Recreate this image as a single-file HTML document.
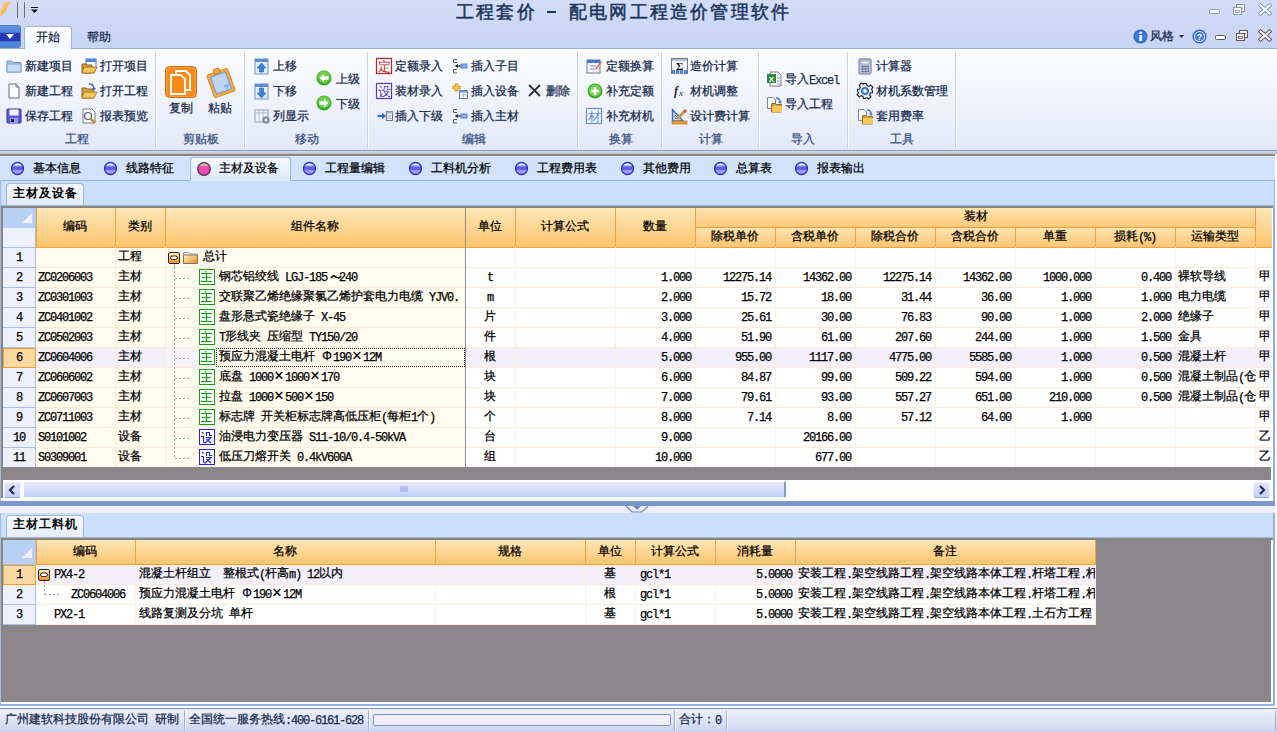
<!DOCTYPE html><html><head><meta charset="utf-8"><style>
*{margin:0;padding:0;box-sizing:border-box}
body{width:1277px;height:732px;position:relative;overflow:hidden;background:#ffffff;font-family:"Liberation Sans",sans-serif;font-size:12px;color:#000}
body>div{position:absolute}
.t{white-space:pre;line-height:12px;font-size:12px;-webkit-text-stroke:0.25px currentColor}
.t i{font-style:normal;font-family:"Liberation Mono",monospace;letter-spacing:-1.2px;position:relative;top:1px}
.rb{color:#15294b}
.w{display:inline-block;width:12px;height:12px;line-height:12px;vertical-align:top;text-align:center;font-weight:normal}
.gl{color:#34507e}
svg{position:absolute;overflow:visible}
</style></head><body><div style="left:0px;top:0px;width:1277px;height:48px;background:linear-gradient(#d3ddf7,#cdd8f5 50%,#c8d5f2)"></div>
<svg style="left:0;top:0" width="12" height="17"><defs><linearGradient id="lg" x1="0" y1="0" x2="1" y2="1"><stop offset="0" stop-color="#ffd890"/><stop offset="1" stop-color="#f89818"/></linearGradient></defs><path d="M4 2 L11 2 L9 4.5 L7 8 L6.5 10 L2 15.5 L0 16 L0 14 L1.5 9.5 L3 5Z" fill="url(#lg)"/></svg>
<div style="left:17px;top:2px;width:1px;height:16px;background:#6e6e74"></div>
<div style="left:24px;top:2px;width:1px;height:16px;background:#6e6e74"></div>
<svg style="left:31px;top:7px" width="8" height="7"><rect x="0" y="0" width="7" height="1" fill="#111"/><path d="M0 2.5 L7 2.5 L3.5 6 Z" fill="#111"/></svg>
<div class="t" style="left:456px;top:3px;font-size:18px;line-height:18px;color:#1b355a;letter-spacing:2.2px;-webkit-text-stroke:0.5px #1b355a">工程套价</div>
<div style="left:547px;top:11px;width:9px;height:2px;background:#1b355a"></div>
<div class="t" style="left:569px;top:3px;font-size:18px;line-height:18px;color:#1b355a;letter-spacing:2.2px;-webkit-text-stroke:0.5px #1b355a">配电网工程造价管理软件</div>
<svg style="left:1209px;top:4px" width="12" height="12"><rect x="0.5" y="5.5" width="10" height="4" rx="1" fill="#fff" stroke="#8898b8"/></svg>
<svg style="left:1233px;top:4px" width="13" height="12"><rect x="3.5" y="0.5" width="8" height="7" fill="#fff" stroke="#8898b8"/><rect x="5" y="3" width="5" height="2" fill="#8898b8" opacity="0.5"/><rect x="0.5" y="3.5" width="8" height="7" fill="#fff" stroke="#8898b8"/><rect x="2.5" y="6.5" width="4" height="2" fill="none" stroke="#8898b8" stroke-width="0.8"/></svg>
<svg style="left:1259px;top:4px" width="12" height="12"><path d="M1.5 1.5 L10.5 9.5 M10.5 1.5 L1.5 9.5" stroke="#8898b8" stroke-width="4" stroke-linecap="square"/><path d="M1.5 1.5 L10.5 9.5 M10.5 1.5 L1.5 9.5" stroke="#fff" stroke-width="2" stroke-linecap="square"/></svg>
<div style="left:0;top:25px;width:21px;height:23px;background:linear-gradient(#5e96e0 0,#4a86d8 30%,#2a3cb4 35%,#2438b0 70%,#4a86d8 75%,#4a86d8);border:1px solid #5a7cc8;border-left:none;border-radius:0 3px 3px 0"></div>
<svg style="left:6px;top:34px" width="9" height="6"><path d="M0 0 L8 0 L4 5 Z" fill="#fff"/></svg>
<div style="left:24px;top:26px;width:48px;height:23px;background:linear-gradient(#ffffff,#f2f6fd);border:1px solid #9fb2d6;border-bottom:none;border-radius:3px 3px 0 0"></div>
<div class="t rb" style="left:36px;top:31px;">开始</div>
<div class="t rb" style="left:87px;top:31px;">帮助</div>
<svg style="left:1133px;top:29px" width="15" height="15"><circle cx="7.5" cy="7.5" r="7" fill="#2a62c8"/><circle cx="7.5" cy="7.5" r="5.8" fill="#3d7ae0"/><rect x="6.4" y="6" width="2.4" height="6" fill="#fff"/><circle cx="7.6" cy="3.8" r="1.3" fill="#fff"/></svg>
<div class="t rb" style="left:1150px;top:30px;">风格</div>
<svg style="left:1179px;top:35px" width="6" height="4"><path d="M0 0 L5 0 L2.5 3 Z" fill="#15294b"/></svg>
<svg style="left:1192px;top:29px" width="15" height="15"><circle cx="7.5" cy="7.5" r="7" fill="#2a62c8"/><circle cx="7.5" cy="7.5" r="5.6" fill="#e8f0fc"/><circle cx="7.5" cy="7.5" r="4.6" fill="#3d7ae0"/><text x="7.5" y="11" font-size="9" font-weight="bold" text-anchor="middle" fill="#fff" font-family="Liberation Sans">?</text></svg>
<svg style="left:1215px;top:30px" width="12" height="12"><rect x="0.5" y="5.5" width="10" height="4" rx="1" fill="#fff" stroke="#6a5058"/></svg>
<svg style="left:1236px;top:30px" width="13" height="12"><rect x="3.5" y="0.5" width="8" height="7" fill="#fff" stroke="#6a5058"/><rect x="5" y="3" width="5" height="2" fill="#6a5058" opacity="0.5"/><rect x="0.5" y="3.5" width="8" height="7" fill="#fff" stroke="#6a5058"/><rect x="2.5" y="6.5" width="4" height="2" fill="none" stroke="#6a5058" stroke-width="0.8"/></svg>
<svg style="left:1259px;top:30px" width="12" height="12"><path d="M1.5 1.5 L10.5 9.5 M10.5 1.5 L1.5 9.5" stroke="#6a5058" stroke-width="4" stroke-linecap="square"/><path d="M1.5 1.5 L10.5 9.5 M10.5 1.5 L1.5 9.5" stroke="#fff" stroke-width="2" stroke-linecap="square"/></svg>
<div style="left:0;top:48px;width:1277px;height:1px;background:#9aaed6"></div>
<div style="left:25px;top:48px;width:46px;height:1px;background:#fbfcff"></div>
<div style="left:0px;top:49px;width:1277px;height:101px;background:linear-gradient(#fcfdff,#eff2fc 55%,#e3e8f8)"></div>
<div style="left:0px;top:150px;width:1277px;height:1px;background:#8aa0c8"></div>
<div style="left:0px;top:151px;width:1277px;height:3px;background:linear-gradient(#d6dae8,#b9bfd3)"></div>
<div style="left:0px;top:154px;width:1275px;height:2px;background:#8e8676"></div>
<div style="left:155px;top:52px;width:1px;height:96px;background:#c9d3e8"></div>
<div style="left:156px;top:52px;width:1px;height:96px;background:#ffffff"></div>
<div style="left:244px;top:52px;width:1px;height:96px;background:#c9d3e8"></div>
<div style="left:245px;top:52px;width:1px;height:96px;background:#ffffff"></div>
<div style="left:367px;top:52px;width:1px;height:96px;background:#c9d3e8"></div>
<div style="left:368px;top:52px;width:1px;height:96px;background:#ffffff"></div>
<div style="left:577px;top:52px;width:1px;height:96px;background:#c9d3e8"></div>
<div style="left:578px;top:52px;width:1px;height:96px;background:#ffffff"></div>
<div style="left:661px;top:52px;width:1px;height:96px;background:#c9d3e8"></div>
<div style="left:662px;top:52px;width:1px;height:96px;background:#ffffff"></div>
<div style="left:758px;top:52px;width:1px;height:96px;background:#c9d3e8"></div>
<div style="left:759px;top:52px;width:1px;height:96px;background:#ffffff"></div>
<div style="left:847px;top:52px;width:1px;height:96px;background:#c9d3e8"></div>
<div style="left:848px;top:52px;width:1px;height:96px;background:#ffffff"></div>
<div style="left:955px;top:52px;width:1px;height:96px;background:#c9d3e8"></div>
<div style="left:956px;top:52px;width:1px;height:96px;background:#ffffff"></div>
<div class="t gl" style="left:65px;top:133px;">工程</div>
<div class="t gl" style="left:183px;top:133px;">剪贴板</div>
<div class="t gl" style="left:295px;top:133px;">移动</div>
<div class="t gl" style="left:462px;top:133px;">编辑</div>
<div class="t gl" style="left:609px;top:133px;">换算</div>
<div class="t gl" style="left:699px;top:133px;">计算</div>
<div class="t gl" style="left:791px;top:133px;">导入</div>
<div class="t gl" style="left:890px;top:133px;">工具</div>
<svg style="left:6px;top:58px" width="16" height="16" viewBox="0 0 16 16"><path d="M1 3 h5 l1.5 1.5 H15 V14 H1 Z" fill="#a9c8f0" stroke="#6e94c8"/><path d="M1 6 H15 V14 H1Z" fill="#c6dcf8" stroke="#7ea2d2"/></svg>
<div class="t rb" style="left:25px;top:60px;">新建项目</div>
<svg style="left:81px;top:58px" width="16" height="16" viewBox="0 0 16 16"><rect x="5" y="1" width="10" height="9" fill="#ffffff" stroke="#3f6fc0"/><rect x="5" y="1" width="10" height="3" fill="#4d86d8"/><path d="M1 6 h4 l1 1 h5 V15 H1Z" fill="#d9a040" stroke="#8a6020"/><path d="M3 9 H16 L13 15 H1Z" fill="#f8c860" stroke="#a87428"/></svg>
<div class="t rb" style="left:100px;top:60px;">打开项目</div>
<svg style="left:6px;top:83px" width="16" height="16" viewBox="0 0 16 16"><path d="M3 1 H10 L13 4 V15 H3Z" fill="#fff" stroke="#606a80"/><path d="M10 1 V4 H13" fill="none" stroke="#606a80"/></svg>
<div class="t rb" style="left:25px;top:85px;">新建工程</div>
<svg style="left:81px;top:83px" width="16" height="16" viewBox="0 0 16 16"><path d="M1 5 h4 l1 1 h6 V15 H1Z" fill="#d9a040" stroke="#8a6020"/><path d="M3 9 H16 L13 15 H1Z" fill="#f8c860" stroke="#a87428"/><path d="M8 1 Q13 1 13 6" stroke="#3a6ac0" stroke-width="1.5" fill="none"/><path d="M11 5 L13 8 L15 5Z" fill="#3a6ac0"/></svg>
<div class="t rb" style="left:100px;top:85px;">打开工程</div>
<svg style="left:6px;top:108px" width="16" height="16" viewBox="0 0 16 16"><rect x="1" y="1" width="14" height="14" rx="1" fill="#5a5ad8" stroke="#3030a0"/><rect x="3.5" y="1.5" width="9" height="6" fill="#f4f4fc"/><rect x="4" y="10" width="8" height="5" fill="#9898e8"/><rect x="5" y="11" width="3" height="3" fill="#202040"/></svg>
<div class="t rb" style="left:25px;top:110px;">保存工程</div>
<svg style="left:81px;top:108px" width="16" height="16" viewBox="0 0 16 16"><path d="M2 1 H11 L14 4 V15 H2Z" fill="#fff" stroke="#707888"/><circle cx="7" cy="8" r="3.5" fill="#e8f0fa" stroke="#505a70" stroke-width="1.2"/><path d="M9.5 10.5 L14 15" stroke="#d09030" stroke-width="2.5"/></svg>
<div class="t rb" style="left:100px;top:110px;">报表预览</div>
<svg style="left:165px;top:66px" width="32" height="32" viewBox="0 0 32 32"><rect x="0.5" y="0.5" width="31" height="31" rx="4" fill="#f78c1a" stroke="#d06a08"/><rect x="1.5" y="1.5" width="29" height="29" rx="3" fill="none" stroke="#ffb060" stroke-opacity="0.6"/><path d="M11 5 H21 L25 9 V24 H11Z" fill="#f78c1a" stroke="#fff" stroke-width="1.8"/><path d="M6 9 H16 L20 13 V28 H6Z" fill="#f78c1a" stroke="#fff" stroke-width="1.8"/></svg>
<div class="t rb" style="left:169px;top:102px;">复制</div>
<svg style="left:205px;top:66px" width="32" height="32" viewBox="0 0 32 32"><g transform="rotate(-20 16 17)"><rect x="5" y="5" width="22" height="24" rx="2" fill="#f4a848" stroke="#e08a20"/><rect x="8" y="8" width="16" height="18" fill="#bcd6f4" stroke="#6e9ad8"/><rect x="13" y="2" width="6" height="5" rx="1" fill="#f4a848" stroke="#d88018"/><path d="M17 20 L24 20 L20 26Z" fill="#8ab4ea"/></g></svg>
<div class="t rb" style="left:208px;top:102px;">粘贴</div>
<svg style="left:254px;top:58px" width="16" height="16" viewBox="0 0 16 16"><rect x="1" y="1" width="13" height="15" fill="#e4eefc" stroke="#6f94cc"/><rect x="1" y="1" width="13" height="3" fill="#5f8ad0"/><path d="M7.5 5 L12 10 H9.5 V14 H5.5 V10 H3Z" fill="#3a82e0" stroke="#2860b8" stroke-width="0.6"/></svg>
<div class="t rb" style="left:273px;top:60px;">上移</div>
<svg style="left:254px;top:83px" width="16" height="16" viewBox="0 0 16 16"><rect x="1" y="1" width="13" height="15" fill="#e4eefc" stroke="#6f94cc"/><rect x="1" y="1" width="13" height="3" fill="#5f8ad0"/><path d="M7.5 15 L12 10 H9.5 V5 H5.5 V10 H3Z" fill="#3a82e0" stroke="#2860b8" stroke-width="0.6"/></svg>
<div class="t rb" style="left:273px;top:85px;">下移</div>
<svg style="left:254px;top:108px" width="16" height="16" viewBox="0 0 16 16"><rect x="1" y="2" width="13" height="12" fill="#f4f6fb" stroke="#9098b0"/><path d="M1 5 H14 M5 2 V14 M9 2 V14" stroke="#b0b8cc"/><circle cx="12" cy="12" r="3.2" fill="#9aa2b4" stroke="#707888"/><circle cx="12" cy="12" r="1.2" fill="#fff"/></svg>
<div class="t rb" style="left:273px;top:110px;">列显示</div>
<svg style="left:316px;top:70px" width="16" height="16" viewBox="0 0 16 16"><circle cx="8" cy="8" r="7.5" fill="#3ea82a"/><circle cx="8" cy="7" r="6" fill="#6cd04a"/><path d="M3.5 8 L8 3.8 V6.3 H12.5 V9.7 H8 V12.2Z" fill="#fff"/></svg>
<div class="t rb" style="left:336px;top:73px;">上级</div>
<svg style="left:316px;top:95px" width="16" height="16" viewBox="0 0 16 16"><circle cx="8" cy="8" r="7.5" fill="#3ea82a"/><circle cx="8" cy="7" r="6" fill="#6cd04a"/><path d="M12.5 8 L8 3.8 V6.3 H3.5 V9.7 H8 V12.2Z" fill="#fff"/></svg>
<div class="t rb" style="left:336px;top:98px;">下级</div>
<svg style="left:376px;top:58px" width="16" height="16" viewBox="0 0 16 16"><rect x="0.5" y="0.5" width="15" height="15" fill="#fff" stroke="#c02020" stroke-width="1.2"/><text x="8" y="13" font-size="13" text-anchor="middle" fill="#c02020" font-family="Liberation Sans">定</text></svg>
<div class="t rb" style="left:395px;top:60px;">定额录入</div>
<svg style="left:376px;top:83px" width="16" height="16" viewBox="0 0 16 16"><rect x="0.5" y="0.5" width="15" height="15" fill="#fff" stroke="#4a3ad0" stroke-width="1.2"/><text x="8" y="13" font-size="13" text-anchor="middle" fill="#4a3ad0" font-family="Liberation Sans">设</text></svg>
<div class="t rb" style="left:395px;top:85px;">装材录入</div>
<svg style="left:377px;top:108px" width="16" height="16" viewBox="0 0 16 16"><path d="M0.5 8 H6" stroke="#3a6ad0" stroke-width="2.2"/><path d="M5 4.5 L9 8 L5 11.5Z" fill="#3a6ad0"/><rect x="9.5" y="3.5" width="6" height="9" fill="#f6f8fc" stroke="#6a7490"/><rect x="9.5" y="3.5" width="6" height="2" fill="#a0b0d0"/><path d="M10.5 8 H14.5 M10.5 10.5 H14.5" stroke="#9aa2b4"/></svg>
<div class="t rb" style="left:395px;top:110px;">插入下级</div>
<svg style="left:452px;top:58px" width="16" height="16" viewBox="0 0 16 16"><path d="M5 1.5 H1.5 V4.5 H5 M5 11.5 H1.5 V15 H5" stroke="#505868" fill="none"/><path d="M3.5 8 H9" stroke="#202830" stroke-width="1.2"/><path d="M3 8 L6 6 V10Z" fill="#202830"/><rect x="9" y="6" width="6" height="4" fill="#8ab4f0" stroke="#3a6ac0" stroke-width="0.8"/></svg>
<div class="t rb" style="left:471px;top:60px;">插入子目</div>
<svg style="left:452px;top:83px" width="16" height="16" viewBox="0 0 16 16"><path d="M4.5 0.5 V8.5 M0.5 4.5 H8.5" stroke="#c88a10" stroke-width="3.6"/><path d="M4.5 1.5 V7.5 M1.5 4.5 H7.5" stroke="#ffd040" stroke-width="2"/><rect x="7.5" y="7.5" width="8" height="8" fill="#fff" stroke="#5a7ab8"/><rect x="7.5" y="7.5" width="8" height="2" fill="#6a98e0"/><path d="M7.5 12 H15.5 M11.5 9.5 V15.5" stroke="#a0b0d0" stroke-width="0.8"/></svg>
<div class="t rb" style="left:471px;top:85px;">插入设备</div>
<svg style="left:452px;top:108px" width="16" height="16" viewBox="0 0 16 16"><path d="M5 1.5 H1.5 V4.5 H5 M5 11.5 H1.5 V15 H5" stroke="#505868" fill="none"/><path d="M3.5 8 H9" stroke="#202830" stroke-width="1.2"/><path d="M3 8 L6 6 V10Z" fill="#202830"/><rect x="9" y="6" width="6" height="4" fill="#8ab4f0" stroke="#3a6ac0" stroke-width="0.8"/></svg>
<div class="t rb" style="left:471px;top:110px;">插入主材</div>
<svg style="left:527px;top:83px" width="16" height="16" viewBox="0 0 16 16"><path d="M2 2 L13 13 M13 2 L2 13" stroke="#303038" stroke-width="1.8"/></svg>
<div class="t rb" style="left:546px;top:85px;">删除</div>
<svg style="left:586px;top:58px" width="16" height="16" viewBox="0 0 16 16"><rect x="1" y="2" width="13" height="13" fill="#f4f6fb" stroke="#6a7ca0"/><rect x="1" y="2" width="13" height="3" fill="#4a78c8"/><path d="M4 8 H10 M4 11 H9" stroke="#8090b0"/><path d="M9 11 L15 3 L16 4 L10 12Z" fill="#e07020"/></svg>
<div class="t rb" style="left:606px;top:60px;">定额换算</div>
<svg style="left:587px;top:83px" width="16" height="16" viewBox="0 0 16 16"><circle cx="8" cy="8" r="7.5" fill="#3ea82a"/><circle cx="8" cy="7.5" r="6" fill="#72d050"/><path d="M8 4 V12 M4 8 H12" stroke="#fff" stroke-width="2.4"/></svg>
<div class="t rb" style="left:606px;top:85px;">补充定额</div>
<svg style="left:586px;top:108px" width="16" height="16" viewBox="0 0 16 16"><rect x="0.5" y="0.5" width="15" height="15" fill="#f2f6fc" stroke="#6090d0" stroke-width="1.2"/><text x="8" y="13" font-size="13" text-anchor="middle" fill="#6090d0" font-family="Liberation Sans">材</text></svg>
<div class="t rb" style="left:606px;top:110px;">补充材机</div>
<svg style="left:671px;top:58px" width="17" height="17" viewBox="0 0 17 17"><rect x="0.5" y="0.5" width="16" height="15" fill="#f4f6fa" stroke="#6a7890"/><path d="M1 2 H16" stroke="#7a8aa8"/><text x="8.5" y="11.5" font-size="11" font-weight="bold" text-anchor="middle" fill="#101820" font-family="Liberation Serif">Σ</text><rect x="1" y="12" width="15" height="3.5" fill="#5a86d0"/><path d="M4.5 12 V16 M8.5 12 V16 M12.5 12 V16" stroke="#e0e8f8" stroke-width="0.8"/></svg>
<div class="t rb" style="left:690px;top:60px;">造价计算</div>
<svg style="left:673px;top:83px" width="16" height="16" viewBox="0 0 16 16"><text x="1" y="12" font-size="12" font-style="italic" font-weight="bold" fill="#202840" font-family="Liberation Serif">f</text><text x="6" y="13" font-size="9" font-style="italic" fill="#202840" font-family="Liberation Serif">x</text></svg>
<div class="t rb" style="left:690px;top:85px;">材机调整</div>
<svg style="left:671px;top:108px" width="16" height="16" viewBox="0 0 16 16"><path d="M1.5 1.5 V13 H12Z" fill="#cfe0fa" stroke="#3a6ad0" stroke-width="1.4"/><path d="M4 7 V10.5 H7.5Z" fill="#fff" stroke="#3a6ad0" stroke-width="0.8"/><path d="M6 11 L14 3" stroke="#c89048" stroke-width="2.6"/><path d="M13 2 L15 4" stroke="#e05030" stroke-width="2.6"/><rect x="1" y="13" width="15" height="3" fill="#f0a030" stroke="#a86818" stroke-width="0.6"/></svg>
<div class="t rb" style="left:690px;top:110px;">设计费计算</div>
<svg style="left:766px;top:71px" width="16" height="16" viewBox="0 0 16 16"><path d="M4 1 H12 L15 4 V15 H4Z" fill="#fff" stroke="#708090"/><rect x="1" y="3" width="9" height="9" fill="#2d8a3a"/><text x="5.5" y="10.5" font-size="8" font-weight="bold" text-anchor="middle" fill="#fff" font-family="Liberation Sans">X</text><path d="M11 7 H14 M11 10 H14 M11 13 H14" stroke="#8090a0"/></svg>
<div class="t rb" style="left:785px;top:73px;">导入<i>Excel</i></div>
<svg style="left:766px;top:96px" width="16" height="16" viewBox="0 0 16 16"><path d="M1.5 1.5 H7 L9.5 4 V12.5 H1.5Z" fill="#fff" stroke="#7a8498"/><path d="M10 2 Q14 2 14 6" stroke="#3a78d8" stroke-width="1.4" fill="none"/><path d="M12 5.5 L14 8 L16 5.5Z" fill="#3a78d8"/><path d="M5.5 7.5 h4 l1 1 h5 V16 H5.5Z" fill="#d8a040" stroke="#9a6a20"/><path d="M6 10 H16 V16 H6Z" fill="#f8c858"/></svg>
<div class="t rb" style="left:785px;top:98px;">导入工程</div>
<svg style="left:857px;top:58px" width="16" height="16" viewBox="0 0 16 16"><rect x="2" y="1" width="12" height="15" rx="1" fill="#c4cce0" stroke="#6a7494"/><rect x="4" y="3" width="8" height="3" fill="#e8f0fc" stroke="#7a8aa8" stroke-width="0.6"/><path d="M4.5 8.5 h2 M7.5 8.5 h2 M10.5 8.5 h1.5 M4.5 11 h2 M7.5 11 h2 M10.5 11 h1.5 M4.5 13.5 h2 M7.5 13.5 h2 M10.5 13.5 h1.5" stroke="#3a4a80" stroke-width="1.5"/></svg>
<div class="t rb" style="left:876px;top:60px;">计算器</div>
<svg style="left:857px;top:83px" width="16" height="16" viewBox="0 0 16 16"><g transform="translate(8 8)"><path d="M-1.6 -7.5 H1.6 L2 -5.4 L3.9 -4.6 L5.6 -5.9 L7.9 -3.6 L6.6 -1.9 L7.4 0 L7.5 1.6 L5.4 2 L4.6 3.9 L5.9 5.6 L3.6 7.9 L1.9 6.6 L0 7.4 L-1.6 7.5 L-2 5.4 L-3.9 4.6 L-5.6 5.9 L-7.9 3.6 L-6.6 1.9 L-7.4 0 L-7.5 -1.6 L-5.4 -2 L-4.6 -3.9 L-5.9 -5.6 L-3.6 -7.9 L-1.9 -6.6Z" fill="#e8f0fc" stroke="#1a2030" stroke-width="1.1"/><circle r="3.6" fill="#4a8ae0" stroke="#2a4a90" stroke-width="0.8"/><circle r="1.8" fill="#fff"/></g></svg>
<div class="t rb" style="left:876px;top:85px;">材机系数管理</div>
<svg style="left:857px;top:108px" width="16" height="16" viewBox="0 0 16 16"><path d="M1.5 1.5 H7 L9.5 4 V12.5 H1.5Z" fill="#fff" stroke="#7a8498"/><path d="M10 2 Q14 2 14 6" stroke="#3a78d8" stroke-width="1.4" fill="none"/><path d="M12 5.5 L14 8 L16 5.5Z" fill="#3a78d8"/><path d="M5.5 7.5 h4 l1 1 h5 V16 H5.5Z" fill="#d8a040" stroke="#9a6a20"/><path d="M6 10 H16 V16 H6Z" fill="#f8c858"/></svg>
<div class="t rb" style="left:876px;top:110px;">套用费率</div>
<div style="left:0px;top:156px;width:1275px;height:24px;background:#d0e3fb"></div>
<div style="left:190px;top:157px;width:101px;height:23px;background:linear-gradient(#f4f8fe,#dde9f9);border:1px solid #9db7e0;border-bottom:none;border-radius:3px 3px 0 0"></div>
<svg style="left:0;top:0" width="1" height="1"><defs><linearGradient id="bb" x1="0" y1="0" x2="0" y2="1"><stop offset="0" stop-color="#ffffff"/><stop offset="0.18" stop-color="#f4f0ff"/><stop offset="0.3" stop-color="#9090f0"/><stop offset="0.38" stop-color="#5a62e8"/><stop offset="0.6" stop-color="#5a62e8"/><stop offset="0.66" stop-color="#a890f4"/><stop offset="1" stop-color="#b0a0f8"/></linearGradient></defs></svg>
<svg style="left:11px;top:162px" width="13" height="13" viewBox="0 0 13 13"><circle cx="6.5" cy="6.5" r="6" fill="url(#bb)" stroke="#2434b4" stroke-width="1.3"/></svg>
<div class="t" style="left:33px;top:162px;">基本信息</div>
<svg style="left:104px;top:162px" width="13" height="13" viewBox="0 0 13 13"><circle cx="6.5" cy="6.5" r="6" fill="url(#bb)" stroke="#2434b4" stroke-width="1.3"/></svg>
<div class="t" style="left:126px;top:162px;">线路特征</div>
<svg style="left:197px;top:162px" width="14" height="14" viewBox="0 0 14 14"><defs><linearGradient id="pk" x1="0" y1="0" x2="0" y2="1"><stop offset="0" stop-color="#d8d0a0"/><stop offset="0.22" stop-color="#c8b8a0"/><stop offset="0.3" stop-color="#ec48b4"/><stop offset="1" stop-color="#ee4cb0"/></linearGradient></defs><circle cx="7" cy="7" r="6.3" fill="url(#pk)" stroke="#4a3040" stroke-width="1.2"/></svg>
<div class="t" style="left:219px;top:162px;">主材及设备</div>
<svg style="left:303px;top:162px" width="13" height="13" viewBox="0 0 13 13"><circle cx="6.5" cy="6.5" r="6" fill="url(#bb)" stroke="#2434b4" stroke-width="1.3"/></svg>
<div class="t" style="left:325px;top:162px;">工程量编辑</div>
<svg style="left:409px;top:162px" width="13" height="13" viewBox="0 0 13 13"><circle cx="6.5" cy="6.5" r="6" fill="url(#bb)" stroke="#2434b4" stroke-width="1.3"/></svg>
<div class="t" style="left:431px;top:162px;">工料机分析</div>
<svg style="left:515px;top:162px" width="13" height="13" viewBox="0 0 13 13"><circle cx="6.5" cy="6.5" r="6" fill="url(#bb)" stroke="#2434b4" stroke-width="1.3"/></svg>
<div class="t" style="left:537px;top:162px;">工程费用表</div>
<svg style="left:621px;top:162px" width="13" height="13" viewBox="0 0 13 13"><circle cx="6.5" cy="6.5" r="6" fill="url(#bb)" stroke="#2434b4" stroke-width="1.3"/></svg>
<div class="t" style="left:643px;top:162px;">其他费用</div>
<svg style="left:714px;top:162px" width="13" height="13" viewBox="0 0 13 13"><circle cx="6.5" cy="6.5" r="6" fill="url(#bb)" stroke="#2434b4" stroke-width="1.3"/></svg>
<div class="t" style="left:736px;top:162px;">总算表</div>
<svg style="left:795px;top:162px" width="13" height="13" viewBox="0 0 13 13"><circle cx="6.5" cy="6.5" r="6" fill="url(#bb)" stroke="#2434b4" stroke-width="1.3"/></svg>
<div class="t" style="left:817px;top:162px;">报表输出</div>
<div style="left:0px;top:180px;width:1275px;height:26px;background:#c9dffa;border-top:1px solid #8fb3ea;border-right:1px solid #8fb3ea"></div>
<div style="left:0px;top:180px;width:1px;height:528px;background:#9bbcec"></div>
<div style="left:1273px;top:206px;width:2px;height:500px;background:#8fb3ea"></div>
<div style="left:6px;top:183px;width:78px;height:24px;background:linear-gradient(#f6f9fe,#e3ecf9);border:1px solid #9db7e0;border-bottom:none;border-radius:4px 4px 0 0"></div>
<div style="left:191px;top:180px;width:99px;height:1px;background:#dde9f9"></div>
<div class="t" style="left:13px;top:187px;font-weight:bold;letter-spacing:1px;-webkit-text-stroke:0">主材及设备</div>
<div style="left:0px;top:205px;width:1275px;height:1px;background:#98baee"></div>
<div style="left:1px;top:206px;width:1272px;height:2px;background:#8c8478"></div>
<div style="left:1px;top:206px;width:2px;height:293px;background:#8c8478"></div>
<div style="left:1271px;top:208px;width:2px;height:272px;background:#ffffff"></div>
<div style="left:3px;top:208px;width:33px;height:20px;background:#b8d0f4"></div>
<div style="left:3px;top:228px;width:32px;height:19px;background:#eef0fb"></div>
<div style="left:35px;top:208px;width:1px;height:40px;background:#a8bfe6"></div>
<div style="left:3px;top:247px;width:32px;height:1px;background:#a8bfe6"></div>
<svg style="left:20px;top:212px" width="13" height="12"><path d="M12 1 L12 11 L2 11Z" fill="#f2f2f6"/></svg>
<div style="left:36px;top:208px;width:1236px;height:40px;background:linear-gradient(#fde6b8,#fdd592 50%,#fbc46a)"></div>
<div style="left:696px;top:208px;width:560px;height:19px;background:linear-gradient(#fde3ae,#fcca7c)"></div>
<div style="left:696px;top:228px;width:560px;height:19px;background:linear-gradient(#fde3ae,#fbc672)"></div>
<div style="left:36px;top:247px;width:1236px;height:1px;background:#f5a03c"></div>
<div style="left:695px;top:227px;width:561px;height:1px;background:#f5a03c"></div>
<div style="left:36px;top:208px;width:1px;height:40px;background:#f5a03c"></div>
<div style="left:115px;top:208px;width:1px;height:40px;background:#f5a03c"></div>
<div style="left:165px;top:208px;width:1px;height:40px;background:#f5a03c"></div>
<div style="left:515px;top:208px;width:1px;height:40px;background:#f5a03c"></div>
<div style="left:615px;top:208px;width:1px;height:40px;background:#f5a03c"></div>
<div style="left:695px;top:208px;width:1px;height:40px;background:#f5a03c"></div>
<div style="left:1255px;top:208px;width:1px;height:40px;background:#f5a03c"></div>
<div style="left:775px;top:228px;width:1px;height:19px;background:#f5a03c"></div>
<div style="left:855px;top:228px;width:1px;height:19px;background:#f5a03c"></div>
<div style="left:935px;top:228px;width:1px;height:19px;background:#f5a03c"></div>
<div style="left:1015px;top:228px;width:1px;height:19px;background:#f5a03c"></div>
<div style="left:1095px;top:228px;width:1px;height:19px;background:#f5a03c"></div>
<div style="left:1175px;top:228px;width:1px;height:19px;background:#f5a03c"></div>
<div class="t" style="left:35px;top:220px;width:80px;text-align:center;">编码</div>
<div class="t" style="left:115px;top:220px;width:50px;text-align:center;">类别</div>
<div class="t" style="left:165px;top:220px;width:300px;text-align:center;">组件名称</div>
<div class="t" style="left:465px;top:220px;width:50px;text-align:center;">单位</div>
<div class="t" style="left:515px;top:220px;width:100px;text-align:center;">计算公式</div>
<div class="t" style="left:615px;top:220px;width:80px;text-align:center;">数量</div>
<div class="t" style="left:876px;top:210px;width:200px;text-align:center;">装材</div>
<div class="t" style="left:695px;top:230px;width:80px;text-align:center;">除税单价</div>
<div class="t" style="left:775px;top:230px;width:80px;text-align:center;">含税单价</div>
<div class="t" style="left:855px;top:230px;width:80px;text-align:center;">除税合价</div>
<div class="t" style="left:935px;top:230px;width:80px;text-align:center;">含税合价</div>
<div class="t" style="left:1015px;top:230px;width:80px;text-align:center;">单重</div>
<div class="t" style="left:1095px;top:230px;width:80px;text-align:center;">损耗<i>(%)</i></div>
<div class="t" style="left:1175px;top:230px;width:80px;text-align:center;">运输类型</div>
<div style="left:3px;top:248px;width:32px;height:219px;background:#eef0fb"></div>
<div style="left:36px;top:248px;width:430px;height:219px;background:#fffbee"></div>
<div style="left:466px;top:248px;width:806px;height:219px;background:#ffffff"></div>
<div style="left:36px;top:348px;width:130px;height:19px;background:#f3f0fc"></div>
<div style="left:466px;top:348px;width:806px;height:19px;background:#f3f0fc"></div>
<div style="left:166px;top:348px;width:50px;height:19px;background:#f7f3f6"></div>
<div style="left:3px;top:267px;width:32px;height:1px;background:#a8bfe6"></div>
<div style="left:3px;top:287px;width:32px;height:1px;background:#a8bfe6"></div>
<div style="left:3px;top:307px;width:32px;height:1px;background:#a8bfe6"></div>
<div style="left:3px;top:327px;width:32px;height:1px;background:#a8bfe6"></div>
<div style="left:3px;top:347px;width:32px;height:1px;background:#a8bfe6"></div>
<div style="left:3px;top:367px;width:32px;height:1px;background:#a8bfe6"></div>
<div style="left:3px;top:387px;width:32px;height:1px;background:#a8bfe6"></div>
<div style="left:3px;top:407px;width:32px;height:1px;background:#a8bfe6"></div>
<div style="left:3px;top:427px;width:32px;height:1px;background:#a8bfe6"></div>
<div style="left:3px;top:447px;width:32px;height:1px;background:#a8bfe6"></div>
<div style="left:3px;top:467px;width:32px;height:1px;background:#a8bfe6"></div>
<div style="left:35px;top:248px;width:1px;height:219px;background:#a8bfe6"></div>
<div style="left:3px;top:348px;width:33px;height:20px;background:#fdd9a2;border:1px solid #f89a30"></div>
<div style="left:36px;top:267px;width:1236px;height:1px;background:#fcecd9"></div>
<div style="left:36px;top:287px;width:1236px;height:1px;background:#fcecd9"></div>
<div style="left:36px;top:307px;width:1236px;height:1px;background:#fcecd9"></div>
<div style="left:36px;top:327px;width:1236px;height:1px;background:#fcecd9"></div>
<div style="left:36px;top:347px;width:1236px;height:1px;background:#fcecd9"></div>
<div style="left:36px;top:367px;width:1236px;height:1px;background:#fcecd9"></div>
<div style="left:36px;top:387px;width:1236px;height:1px;background:#fcecd9"></div>
<div style="left:36px;top:407px;width:1236px;height:1px;background:#fcecd9"></div>
<div style="left:36px;top:427px;width:1236px;height:1px;background:#fcecd9"></div>
<div style="left:36px;top:447px;width:1236px;height:1px;background:#fcecd9"></div>
<div style="left:36px;top:467px;width:1236px;height:1px;background:#fcecd9"></div>
<div style="left:115px;top:247px;width:1px;height:220px;background:#fcecd9"></div>
<div style="left:165px;top:247px;width:1px;height:220px;background:#fcecd9"></div>
<div style="left:515px;top:247px;width:1px;height:220px;background:#fcecd9"></div>
<div style="left:615px;top:247px;width:1px;height:220px;background:#fcecd9"></div>
<div style="left:695px;top:247px;width:1px;height:220px;background:#fcecd9"></div>
<div style="left:775px;top:247px;width:1px;height:220px;background:#fcecd9"></div>
<div style="left:855px;top:247px;width:1px;height:220px;background:#fcecd9"></div>
<div style="left:935px;top:247px;width:1px;height:220px;background:#fcecd9"></div>
<div style="left:1015px;top:247px;width:1px;height:220px;background:#fcecd9"></div>
<div style="left:1095px;top:247px;width:1px;height:220px;background:#fcecd9"></div>
<div style="left:1175px;top:247px;width:1px;height:220px;background:#fcecd9"></div>
<div style="left:1255px;top:247px;width:1px;height:220px;background:#fcecd9"></div>
<div style="left:465px;top:208px;width:1px;height:259px;background:#8c8c8c"></div>
<div style="left:3px;top:467px;width:1268px;height:13px;background:#8a8689"></div>
<div class="t" style="left:4px;top:250px;width:30px;text-align:center;"><i>1</i></div>
<div class="t" style="left:118px;top:250px;">工程</div>
<svg style="left:168px;top:252px" width="12" height="12" viewBox="0 0 12 12"><defs><linearGradient id="mg" x1="0" y1="0" x2="0" y2="1"><stop offset="0" stop-color="#fff4c8"/><stop offset="1" stop-color="#e8901c"/></linearGradient><linearGradient id="fg" x1="0" y1="0" x2="1" y2="1"><stop offset="0" stop-color="#fff4d0"/><stop offset="1" stop-color="#e88a18"/></linearGradient></defs><rect x="0.5" y="0.5" width="11" height="11" rx="1.5" fill="url(#mg)" stroke="#302010"/><rect x="2.5" y="4" width="7" height="3.5" rx="1.7" fill="#fff" stroke="#201008" stroke-width="0.9"/></svg>
<svg style="left:183px;top:251px" width="16" height="14" viewBox="0 0 16 14"><path d="M0.5 1.5 h5 l1.5 1.5 h7.5 V12.5 H0.5Z" fill="#f0f0f0" stroke="#a09890"/><path d="M0.5 4 H14.5 V12.5 H0.5Z" fill="url(#fg)" stroke="#807060"/></svg>
<div class="t" style="left:203px;top:250px;">总计</div>
<div class="t" style="left:4px;top:270px;width:30px;text-align:center;"><i>2</i></div>
<div class="t" style="left:38px;top:270px;"><i>ZC0206003</i></div>
<div class="t" style="left:118px;top:270px;">主材</div>
<div style="left:174px;top:267px;width:1px;height:20px;background:repeating-linear-gradient(#a8a8a8 0 2px,transparent 2px 4px)"></div>
<div style="left:175px;top:278px;width:14px;height:1px;background:repeating-linear-gradient(90deg,#a8a8a8 0 2px,transparent 2px 4px)"></div>
<svg style="left:199px;top:269px" width="16" height="16" viewBox="0 0 16 16"><rect x="0.5" y="0.5" width="15" height="15" fill="#fff" stroke="#10a010"/><g stroke="#10a010" stroke-width="1.1" fill="none"><path d="M2 4.5 H13"/><path d="M3 8.5 H12"/><path d="M2 12.5 H13"/><path d="M7.5 4.5 V12.5"/><path d="M6 2.2 L7.3 3.5"/></g></svg>
<div class="t" style="left:219px;top:270px;">钢芯铝绞线<i> LGJ-185</i><b class="w" style="font-size:18px">～</b><i>240</i></div>
<div class="t" style="left:470px;top:270px;width:40px;text-align:center;"><i>t</i></div>
<div class="t" style="right:586px;top:270px;text-align:right;"><i>1.000</i></div>
<div class="t" style="right:506px;top:270px;text-align:right;"><i>12275.14</i></div>
<div class="t" style="right:426px;top:270px;text-align:right;"><i>14362.00</i></div>
<div class="t" style="right:346px;top:270px;text-align:right;"><i>12275.14</i></div>
<div class="t" style="right:266px;top:270px;text-align:right;"><i>14362.00</i></div>
<div class="t" style="right:186px;top:270px;text-align:right;"><i>1000.000</i></div>
<div class="t" style="right:106px;top:270px;text-align:right;"><i>0.400</i></div>
<div class="t" style="left:1178px;top:270px;">裸软导线</div>
<div class="t" style="left:1259px;top:270px;">甲</div>
<div class="t" style="left:4px;top:290px;width:30px;text-align:center;"><i>3</i></div>
<div class="t" style="left:38px;top:290px;"><i>ZC0301003</i></div>
<div class="t" style="left:118px;top:290px;">主材</div>
<div style="left:174px;top:287px;width:1px;height:20px;background:repeating-linear-gradient(#a8a8a8 0 2px,transparent 2px 4px)"></div>
<div style="left:175px;top:298px;width:14px;height:1px;background:repeating-linear-gradient(90deg,#a8a8a8 0 2px,transparent 2px 4px)"></div>
<svg style="left:199px;top:289px" width="16" height="16" viewBox="0 0 16 16"><rect x="0.5" y="0.5" width="15" height="15" fill="#fff" stroke="#10a010"/><g stroke="#10a010" stroke-width="1.1" fill="none"><path d="M2 4.5 H13"/><path d="M3 8.5 H12"/><path d="M2 12.5 H13"/><path d="M7.5 4.5 V12.5"/><path d="M6 2.2 L7.3 3.5"/></g></svg>
<div class="t" style="left:219px;top:290px;">交联聚乙烯绝缘聚氯乙烯护套电力电缆<i> YJV0.</i></div>
<div class="t" style="left:470px;top:290px;width:40px;text-align:center;"><i>m</i></div>
<div class="t" style="right:586px;top:290px;text-align:right;"><i>2.000</i></div>
<div class="t" style="right:506px;top:290px;text-align:right;"><i>15.72</i></div>
<div class="t" style="right:426px;top:290px;text-align:right;"><i>18.00</i></div>
<div class="t" style="right:346px;top:290px;text-align:right;"><i>31.44</i></div>
<div class="t" style="right:266px;top:290px;text-align:right;"><i>36.00</i></div>
<div class="t" style="right:186px;top:290px;text-align:right;"><i>1.000</i></div>
<div class="t" style="right:106px;top:290px;text-align:right;"><i>1.000</i></div>
<div class="t" style="left:1178px;top:290px;">电力电缆</div>
<div class="t" style="left:1259px;top:290px;">甲</div>
<div class="t" style="left:4px;top:310px;width:30px;text-align:center;"><i>4</i></div>
<div class="t" style="left:38px;top:310px;"><i>ZC0401002</i></div>
<div class="t" style="left:118px;top:310px;">主材</div>
<div style="left:174px;top:307px;width:1px;height:20px;background:repeating-linear-gradient(#a8a8a8 0 2px,transparent 2px 4px)"></div>
<div style="left:175px;top:318px;width:14px;height:1px;background:repeating-linear-gradient(90deg,#a8a8a8 0 2px,transparent 2px 4px)"></div>
<svg style="left:199px;top:309px" width="16" height="16" viewBox="0 0 16 16"><rect x="0.5" y="0.5" width="15" height="15" fill="#fff" stroke="#10a010"/><g stroke="#10a010" stroke-width="1.1" fill="none"><path d="M2 4.5 H13"/><path d="M3 8.5 H12"/><path d="M2 12.5 H13"/><path d="M7.5 4.5 V12.5"/><path d="M6 2.2 L7.3 3.5"/></g></svg>
<div class="t" style="left:219px;top:310px;">盘形悬式瓷绝缘子<i> X-45</i></div>
<div class="t" style="left:470px;top:310px;width:40px;text-align:center;">片</div>
<div class="t" style="right:586px;top:310px;text-align:right;"><i>3.000</i></div>
<div class="t" style="right:506px;top:310px;text-align:right;"><i>25.61</i></div>
<div class="t" style="right:426px;top:310px;text-align:right;"><i>30.00</i></div>
<div class="t" style="right:346px;top:310px;text-align:right;"><i>76.83</i></div>
<div class="t" style="right:266px;top:310px;text-align:right;"><i>90.00</i></div>
<div class="t" style="right:186px;top:310px;text-align:right;"><i>1.000</i></div>
<div class="t" style="right:106px;top:310px;text-align:right;"><i>2.000</i></div>
<div class="t" style="left:1178px;top:310px;">绝缘子</div>
<div class="t" style="left:1259px;top:310px;">甲</div>
<div class="t" style="left:4px;top:330px;width:30px;text-align:center;"><i>5</i></div>
<div class="t" style="left:38px;top:330px;"><i>ZC0502003</i></div>
<div class="t" style="left:118px;top:330px;">主材</div>
<div style="left:174px;top:327px;width:1px;height:20px;background:repeating-linear-gradient(#a8a8a8 0 2px,transparent 2px 4px)"></div>
<div style="left:175px;top:338px;width:14px;height:1px;background:repeating-linear-gradient(90deg,#a8a8a8 0 2px,transparent 2px 4px)"></div>
<svg style="left:199px;top:329px" width="16" height="16" viewBox="0 0 16 16"><rect x="0.5" y="0.5" width="15" height="15" fill="#fff" stroke="#10a010"/><g stroke="#10a010" stroke-width="1.1" fill="none"><path d="M2 4.5 H13"/><path d="M3 8.5 H12"/><path d="M2 12.5 H13"/><path d="M7.5 4.5 V12.5"/><path d="M6 2.2 L7.3 3.5"/></g></svg>
<div class="t" style="left:219px;top:330px;"><i>T</i>形线夹<i> </i>压缩型<i> TY150/20</i></div>
<div class="t" style="left:470px;top:330px;width:40px;text-align:center;">件</div>
<div class="t" style="right:586px;top:330px;text-align:right;"><i>4.000</i></div>
<div class="t" style="right:506px;top:330px;text-align:right;"><i>51.90</i></div>
<div class="t" style="right:426px;top:330px;text-align:right;"><i>61.00</i></div>
<div class="t" style="right:346px;top:330px;text-align:right;"><i>207.60</i></div>
<div class="t" style="right:266px;top:330px;text-align:right;"><i>244.00</i></div>
<div class="t" style="right:186px;top:330px;text-align:right;"><i>1.000</i></div>
<div class="t" style="right:106px;top:330px;text-align:right;"><i>1.500</i></div>
<div class="t" style="left:1178px;top:330px;">金具</div>
<div class="t" style="left:1259px;top:330px;">甲</div>
<div class="t" style="left:4px;top:350px;width:30px;text-align:center;"><i>6</i></div>
<div class="t" style="left:38px;top:350px;"><i>ZC0604006</i></div>
<div class="t" style="left:118px;top:350px;">主材</div>
<div style="left:174px;top:347px;width:1px;height:20px;background:repeating-linear-gradient(#a8a8a8 0 2px,transparent 2px 4px)"></div>
<div style="left:175px;top:358px;width:14px;height:1px;background:repeating-linear-gradient(90deg,#a8a8a8 0 2px,transparent 2px 4px)"></div>
<svg style="left:199px;top:349px" width="16" height="16" viewBox="0 0 16 16"><rect x="0.5" y="0.5" width="15" height="15" fill="#fff" stroke="#10a010"/><g stroke="#10a010" stroke-width="1.1" fill="none"><path d="M2 4.5 H13"/><path d="M3 8.5 H12"/><path d="M2 12.5 H13"/><path d="M7.5 4.5 V12.5"/><path d="M6 2.2 L7.3 3.5"/></g></svg>
<div class="t" style="left:219px;top:350px;">预应力混凝土电杆<i> </i><b class="w">Φ</b><i>190</i><b class="w" style="font-size:16px">×</b><i>12M</i></div>
<div class="t" style="left:470px;top:350px;width:40px;text-align:center;">根</div>
<div class="t" style="right:586px;top:350px;text-align:right;"><i>5.000</i></div>
<div class="t" style="right:506px;top:350px;text-align:right;"><i>955.00</i></div>
<div class="t" style="right:426px;top:350px;text-align:right;"><i>1117.00</i></div>
<div class="t" style="right:346px;top:350px;text-align:right;"><i>4775.00</i></div>
<div class="t" style="right:266px;top:350px;text-align:right;"><i>5585.00</i></div>
<div class="t" style="right:186px;top:350px;text-align:right;"><i>1.000</i></div>
<div class="t" style="right:106px;top:350px;text-align:right;"><i>0.500</i></div>
<div class="t" style="left:1178px;top:350px;">混凝土杆</div>
<div class="t" style="left:1259px;top:350px;">甲</div>
<div class="t" style="left:4px;top:370px;width:30px;text-align:center;"><i>7</i></div>
<div class="t" style="left:38px;top:370px;"><i>ZC0606002</i></div>
<div class="t" style="left:118px;top:370px;">主材</div>
<div style="left:174px;top:367px;width:1px;height:20px;background:repeating-linear-gradient(#a8a8a8 0 2px,transparent 2px 4px)"></div>
<div style="left:175px;top:378px;width:14px;height:1px;background:repeating-linear-gradient(90deg,#a8a8a8 0 2px,transparent 2px 4px)"></div>
<svg style="left:199px;top:369px" width="16" height="16" viewBox="0 0 16 16"><rect x="0.5" y="0.5" width="15" height="15" fill="#fff" stroke="#10a010"/><g stroke="#10a010" stroke-width="1.1" fill="none"><path d="M2 4.5 H13"/><path d="M3 8.5 H12"/><path d="M2 12.5 H13"/><path d="M7.5 4.5 V12.5"/><path d="M6 2.2 L7.3 3.5"/></g></svg>
<div class="t" style="left:219px;top:370px;">底盘<i> 1000</i><b class="w" style="font-size:16px">×</b><i>1000</i><b class="w" style="font-size:16px">×</b><i>170</i></div>
<div class="t" style="left:470px;top:370px;width:40px;text-align:center;">块</div>
<div class="t" style="right:586px;top:370px;text-align:right;"><i>6.000</i></div>
<div class="t" style="right:506px;top:370px;text-align:right;"><i>84.87</i></div>
<div class="t" style="right:426px;top:370px;text-align:right;"><i>99.00</i></div>
<div class="t" style="right:346px;top:370px;text-align:right;"><i>509.22</i></div>
<div class="t" style="right:266px;top:370px;text-align:right;"><i>594.00</i></div>
<div class="t" style="right:186px;top:370px;text-align:right;"><i>1.000</i></div>
<div class="t" style="right:106px;top:370px;text-align:right;"><i>0.500</i></div>
<div class="t" style="left:1178px;top:370px;">混凝土制品<i>(</i>仓</div>
<div class="t" style="left:1259px;top:370px;">甲</div>
<div class="t" style="left:4px;top:390px;width:30px;text-align:center;"><i>8</i></div>
<div class="t" style="left:38px;top:390px;"><i>ZC0607003</i></div>
<div class="t" style="left:118px;top:390px;">主材</div>
<div style="left:174px;top:387px;width:1px;height:20px;background:repeating-linear-gradient(#a8a8a8 0 2px,transparent 2px 4px)"></div>
<div style="left:175px;top:398px;width:14px;height:1px;background:repeating-linear-gradient(90deg,#a8a8a8 0 2px,transparent 2px 4px)"></div>
<svg style="left:199px;top:389px" width="16" height="16" viewBox="0 0 16 16"><rect x="0.5" y="0.5" width="15" height="15" fill="#fff" stroke="#10a010"/><g stroke="#10a010" stroke-width="1.1" fill="none"><path d="M2 4.5 H13"/><path d="M3 8.5 H12"/><path d="M2 12.5 H13"/><path d="M7.5 4.5 V12.5"/><path d="M6 2.2 L7.3 3.5"/></g></svg>
<div class="t" style="left:219px;top:390px;">拉盘<i> 1000</i><b class="w" style="font-size:16px">×</b><i>500</i><b class="w" style="font-size:16px">×</b><i>150</i></div>
<div class="t" style="left:470px;top:390px;width:40px;text-align:center;">块</div>
<div class="t" style="right:586px;top:390px;text-align:right;"><i>7.000</i></div>
<div class="t" style="right:506px;top:390px;text-align:right;"><i>79.61</i></div>
<div class="t" style="right:426px;top:390px;text-align:right;"><i>93.00</i></div>
<div class="t" style="right:346px;top:390px;text-align:right;"><i>557.27</i></div>
<div class="t" style="right:266px;top:390px;text-align:right;"><i>651.00</i></div>
<div class="t" style="right:186px;top:390px;text-align:right;"><i>210.000</i></div>
<div class="t" style="right:106px;top:390px;text-align:right;"><i>0.500</i></div>
<div class="t" style="left:1178px;top:390px;">混凝土制品<i>(</i>仓</div>
<div class="t" style="left:1259px;top:390px;">甲</div>
<div class="t" style="left:4px;top:410px;width:30px;text-align:center;"><i>9</i></div>
<div class="t" style="left:38px;top:410px;"><i>ZC0711003</i></div>
<div class="t" style="left:118px;top:410px;">主材</div>
<div style="left:174px;top:407px;width:1px;height:20px;background:repeating-linear-gradient(#a8a8a8 0 2px,transparent 2px 4px)"></div>
<div style="left:175px;top:418px;width:14px;height:1px;background:repeating-linear-gradient(90deg,#a8a8a8 0 2px,transparent 2px 4px)"></div>
<svg style="left:199px;top:409px" width="16" height="16" viewBox="0 0 16 16"><rect x="0.5" y="0.5" width="15" height="15" fill="#fff" stroke="#10a010"/><g stroke="#10a010" stroke-width="1.1" fill="none"><path d="M2 4.5 H13"/><path d="M3 8.5 H12"/><path d="M2 12.5 H13"/><path d="M7.5 4.5 V12.5"/><path d="M6 2.2 L7.3 3.5"/></g></svg>
<div class="t" style="left:219px;top:410px;">标志牌<i> </i>开关柜标志牌高低压柜<i>(</i>每柜<i>1</i>个<i>)</i></div>
<div class="t" style="left:470px;top:410px;width:40px;text-align:center;">个</div>
<div class="t" style="right:586px;top:410px;text-align:right;"><i>8.000</i></div>
<div class="t" style="right:506px;top:410px;text-align:right;"><i>7.14</i></div>
<div class="t" style="right:426px;top:410px;text-align:right;"><i>8.00</i></div>
<div class="t" style="right:346px;top:410px;text-align:right;"><i>57.12</i></div>
<div class="t" style="right:266px;top:410px;text-align:right;"><i>64.00</i></div>
<div class="t" style="right:186px;top:410px;text-align:right;"><i>1.000</i></div>
<div class="t" style="left:1259px;top:410px;">甲</div>
<div class="t" style="left:4px;top:430px;width:30px;text-align:center;"><i>10</i></div>
<div class="t" style="left:38px;top:430px;"><i>S0101002</i></div>
<div class="t" style="left:118px;top:430px;">设备</div>
<div style="left:174px;top:427px;width:1px;height:20px;background:repeating-linear-gradient(#a8a8a8 0 2px,transparent 2px 4px)"></div>
<div style="left:175px;top:438px;width:14px;height:1px;background:repeating-linear-gradient(90deg,#a8a8a8 0 2px,transparent 2px 4px)"></div>
<svg style="left:199px;top:429px" width="16" height="16" viewBox="0 0 16 16"><rect x="0.5" y="0.5" width="15" height="15" fill="#fff" stroke="#2222ee"/><g stroke="#2222ee" stroke-width="1.1" fill="none"><path d="M3 3 L4.5 4.5"/><path d="M2 7.5 H4.5 V13 L5.5 13.8 H7"/><path d="M7.5 7 V3.5 H10.5 V6.5 H13"/><path d="M7 8.5 H12 L6 14"/><path d="M7.5 10 L12 14"/></g></svg>
<div class="t" style="left:219px;top:430px;">油浸电力变压器<i> S11-10/0.4-50kVA</i></div>
<div class="t" style="left:470px;top:430px;width:40px;text-align:center;">台</div>
<div class="t" style="right:586px;top:430px;text-align:right;"><i>9.000</i></div>
<div class="t" style="right:426px;top:430px;text-align:right;"><i>20166.00</i></div>
<div class="t" style="left:1259px;top:430px;">乙</div>
<div class="t" style="left:4px;top:450px;width:30px;text-align:center;"><i>11</i></div>
<div class="t" style="left:38px;top:450px;"><i>S0309001</i></div>
<div class="t" style="left:118px;top:450px;">设备</div>
<div style="left:174px;top:447px;width:1px;height:11px;background:repeating-linear-gradient(#a8a8a8 0 2px,transparent 2px 4px)"></div>
<div style="left:175px;top:458px;width:14px;height:1px;background:repeating-linear-gradient(90deg,#a8a8a8 0 2px,transparent 2px 4px)"></div>
<svg style="left:199px;top:449px" width="16" height="16" viewBox="0 0 16 16"><rect x="0.5" y="0.5" width="15" height="15" fill="#fff" stroke="#2222ee"/><g stroke="#2222ee" stroke-width="1.1" fill="none"><path d="M3 3 L4.5 4.5"/><path d="M2 7.5 H4.5 V13 L5.5 13.8 H7"/><path d="M7.5 7 V3.5 H10.5 V6.5 H13"/><path d="M7 8.5 H12 L6 14"/><path d="M7.5 10 L12 14"/></g></svg>
<div class="t" style="left:219px;top:450px;">低压刀熔开关<i> 0.4kV600A</i></div>
<div class="t" style="left:470px;top:450px;width:40px;text-align:center;">组</div>
<div class="t" style="right:586px;top:450px;text-align:right;"><i>10.000</i></div>
<div class="t" style="right:426px;top:450px;text-align:right;"><i>677.00</i></div>
<div class="t" style="left:1259px;top:450px;">乙</div>
<div style="left:216px;top:348px;width:249px;height:19px;border:1px dotted #202020"></div>
<div style="left:174px;top:264px;width:1px;height:3px;background:#a8a8a8"></div>
<div style="left:3px;top:480px;width:1268px;height:18px;background:#fffdfb"></div>
<div style="left:3px;top:480px;width:1268px;height:1px;background:#ffffff"></div>
<div style="left:4px;top:482px;width:17px;height:16px;background:linear-gradient(#dfe4fc,#c6d2f8);border:1px solid #eef2fe;border-bottom:1px solid #8eaae0;border-radius:2px"></div>
<svg style="left:8px;top:485px" width="8" height="10"><path d="M6 1 L2 5 L6 9" stroke="#202a5c" stroke-width="2.2" fill="none"/></svg>
<div style="left:23px;top:481px;width:763px;height:17px;background:linear-gradient(#e6e8fd,#d4dbfb 60%,#b9cdf8);border:1px solid #ffffff;border-right:2px solid #7a9ad8;border-radius:2px"></div>
<svg style="left:400px;top:486px" width="9" height="6"><path d="M1 0 V6 M3 0 V6 M5 0 V6 M7 0 V6" stroke="#8ea2d6"/></svg>
<div style="left:1253px;top:482px;width:17px;height:16px;background:linear-gradient(#dfe4fc,#c6d2f8);border:1px solid #eef2fe;border-bottom:1px solid #8eaae0;border-radius:2px"></div>
<svg style="left:1258px;top:485px" width="8" height="10"><path d="M2 1 L6 5 L2 9" stroke="#202a5c" stroke-width="2.2" fill="none"/></svg>
<div style="left:1px;top:498px;width:1272px;height:3px;background:#fbfbfe"></div>
<div style="left:0px;top:501px;width:1275px;height:5px;background:#7898d0"></div>
<div style="left:0px;top:506px;width:1275px;height:7px;background:#eeeefb"></div>
<svg style="left:624px;top:505px" width="26" height="8"><path d="M2 1 L8 7 H18 L24 1" stroke="#6a88c0" fill="none" stroke-width="1.2"/><path d="M9 1 L13 5 L17 1Z" fill="#6a88c0"/></svg>
<div style="left:1px;top:513px;width:1272px;height:25px;background:#c9dffa"></div>
<div style="left:6px;top:515px;width:78px;height:24px;background:linear-gradient(#f6f9fe,#e3ecf9);border:1px solid #9db7e0;border-bottom:none;border-radius:4px 4px 0 0"></div>
<div class="t" style="left:13px;top:518px;font-weight:bold;letter-spacing:1px;-webkit-text-stroke:0">主材工料机</div>
<div style="left:0px;top:537px;width:1275px;height:1px;background:#98baee"></div>
<div style="left:1px;top:538px;width:1272px;height:2px;background:#8c8478"></div>
<div style="left:1px;top:538px;width:2px;height:164px;background:#8c8478"></div>
<div style="left:3px;top:540px;width:1268px;height:162px;background:#8a8689"></div>
<div style="left:3px;top:540px;width:32px;height:24px;background:#b8d0f4"></div>
<div style="left:3px;top:564px;width:32px;height:1px;background:#a8bfe6"></div>
<div style="left:35px;top:540px;width:1px;height:85px;background:#a8bfe6"></div>
<svg style="left:20px;top:547px" width="13" height="12"><path d="M12 1 L12 11 L2 11Z" fill="#f2f2f6"/></svg>
<div style="left:36px;top:540px;width:1060px;height:25px;background:linear-gradient(#fde6b8,#fdd592 50%,#fbc46a)"></div>
<div style="left:36px;top:564px;width:1060px;height:1px;background:#f5a03c"></div>
<div style="left:36px;top:540px;width:1px;height:25px;background:#f5a03c"></div>
<div style="left:135px;top:540px;width:1px;height:25px;background:#f5a03c"></div>
<div style="left:435px;top:540px;width:1px;height:25px;background:#f5a03c"></div>
<div style="left:585px;top:540px;width:1px;height:25px;background:#f5a03c"></div>
<div style="left:635px;top:540px;width:1px;height:25px;background:#f5a03c"></div>
<div style="left:715px;top:540px;width:1px;height:25px;background:#f5a03c"></div>
<div style="left:795px;top:540px;width:1px;height:25px;background:#f5a03c"></div>
<div style="left:1095px;top:540px;width:1px;height:25px;background:#f5a03c"></div>
<div class="t" style="left:35px;top:545px;width:100px;text-align:center;">编码</div>
<div class="t" style="left:135px;top:545px;width:300px;text-align:center;">名称</div>
<div class="t" style="left:435px;top:545px;width:150px;text-align:center;">规格</div>
<div class="t" style="left:585px;top:545px;width:50px;text-align:center;">单位</div>
<div class="t" style="left:635px;top:545px;width:80px;text-align:center;">计算公式</div>
<div class="t" style="left:715px;top:545px;width:80px;text-align:center;">消耗量</div>
<div class="t" style="left:795px;top:545px;width:300px;text-align:center;">备注</div>
<div style="left:3px;top:565px;width:32px;height:60px;background:#eef0fb"></div>
<div style="left:36px;top:565px;width:1060px;height:60px;background:#ffffff"></div>
<div style="left:36px;top:565px;width:1060px;height:19px;background:#f3f0fc"></div>
<div style="left:3px;top:584px;width:32px;height:1px;background:#a8bfe6"></div>
<div style="left:36px;top:584px;width:1060px;height:1px;background:#fcecd9"></div>
<div style="left:3px;top:604px;width:32px;height:1px;background:#a8bfe6"></div>
<div style="left:36px;top:604px;width:1060px;height:1px;background:#fcecd9"></div>
<div style="left:3px;top:624px;width:32px;height:1px;background:#a8bfe6"></div>
<div style="left:36px;top:624px;width:1060px;height:1px;background:#fcecd9"></div>
<div style="left:3px;top:565px;width:33px;height:20px;background:#fdd9a2;border:1px solid #f89a30"></div>
<div style="left:135px;top:565px;width:1px;height:60px;background:#fcecd9"></div>
<div style="left:435px;top:565px;width:1px;height:60px;background:#fcecd9"></div>
<div style="left:585px;top:565px;width:1px;height:60px;background:#fcecd9"></div>
<div style="left:635px;top:565px;width:1px;height:60px;background:#fcecd9"></div>
<div style="left:715px;top:565px;width:1px;height:60px;background:#fcecd9"></div>
<div style="left:795px;top:565px;width:1px;height:60px;background:#fcecd9"></div>
<div style="left:1095px;top:565px;width:1px;height:60px;background:#fcecd9"></div>
<div class="t" style="left:4px;top:567px;width:30px;text-align:center;"><i>1</i></div>
<svg style="left:38px;top:569px" width="12" height="12" viewBox="0 0 12 12"><rect x="0.5" y="0.5" width="11" height="11" rx="1.5" fill="url(#mg)" stroke="#302010"/><rect x="2.5" y="4" width="7" height="3.5" rx="1.7" fill="#fff" stroke="#201008" stroke-width="0.9"/></svg>
<div class="t" style="left:54px;top:567px;"><i>PX4-2</i></div>
<div class="t" style="left:139px;top:567px;">混凝土杆组立<i>  </i>整根式<i>(</i>杆高<i>m) 12</i>以内</div>
<div class="t" style="left:585px;top:567px;width:50px;text-align:center;">基</div>
<div class="t" style="left:640px;top:567px;"><i>gcl*1</i></div>
<div class="t" style="right:485px;top:567px;text-align:right;"><i>5.0000</i></div>
<div class="t" style="left:798px;top:567px;width:297px;overflow:hidden">安装工程<i>.</i>架空线路工程<i>.</i>架空线路本体工程<i>.</i>杆塔工程<i>.</i>杆</div>
<div class="t" style="left:4px;top:587px;width:30px;text-align:center;"><i>2</i></div>
<div style="left:44px;top:581px;width:1px;height:14px;background:repeating-linear-gradient(#a8a8a8 0 2px,transparent 2px 4px)"></div>
<div style="left:45px;top:594px;width:15px;height:1px;background:repeating-linear-gradient(90deg,#a8a8a8 0 2px,transparent 2px 4px)"></div>
<div class="t" style="left:71px;top:587px;"><i>ZC0604006</i></div>
<div class="t" style="left:139px;top:587px;">预应力混凝土电杆<i> </i><b class="w">Φ</b><i>190</i><b class="w" style="font-size:16px">×</b><i>12M</i></div>
<div class="t" style="left:585px;top:587px;width:50px;text-align:center;">根</div>
<div class="t" style="left:640px;top:587px;"><i>gcl*1</i></div>
<div class="t" style="right:485px;top:587px;text-align:right;"><i>5.0000</i></div>
<div class="t" style="left:798px;top:587px;width:297px;overflow:hidden">安装工程<i>.</i>架空线路工程<i>.</i>架空线路本体工程<i>.</i>杆塔工程<i>.</i>杆</div>
<div class="t" style="left:4px;top:607px;width:30px;text-align:center;"><i>3</i></div>
<div class="t" style="left:54px;top:607px;"><i>PX2-1</i></div>
<div class="t" style="left:139px;top:607px;">线路复测及分坑<i> </i>单杆</div>
<div class="t" style="left:585px;top:607px;width:50px;text-align:center;">基</div>
<div class="t" style="left:640px;top:607px;"><i>gcl*1</i></div>
<div class="t" style="right:485px;top:607px;text-align:right;"><i>5.0000</i></div>
<div class="t" style="left:798px;top:607px;width:297px;overflow:hidden">安装工程<i>.</i>架空线路工程<i>.</i>架空线路本体工程<i>.</i>土石方工程</div>
<div style="left:1px;top:702px;width:1272px;height:2px;background:#ffffff"></div>
<div style="left:0px;top:704px;width:1275px;height:2px;background:#8fb3ea"></div>
<div style="left:0px;top:706px;width:1277px;height:2px;background:#ffffff"></div>
<div style="left:0px;top:708px;width:1277px;height:1px;background:#7c94bc"></div>
<div style="left:0px;top:709px;width:1277px;height:23px;background:linear-gradient(#eef0fc,#dfe4f7 50%,#cad3ee)"></div>
<div style="left:184px;top:711px;width:1px;height:19px;background:#a0aac4"></div>
<div style="left:185px;top:711px;width:1px;height:19px;background:#ffffff"></div>
<div class="t rb" style="left:5px;top:713px;">广州建软科技股份有限公司<i> </i>研制</div>
<div class="t rb" style="left:189px;top:713px;">全国统一服务热线<i>:400-6161-628</i></div>
<div style="left:368px;top:711px;width:1px;height:19px;background:#a0aac4"></div>
<div style="left:369px;top:711px;width:1px;height:19px;background:#ffffff"></div>
<div style="left:373px;top:714px;width:298px;height:12px;background:#f0f0fc;border:1px solid #7a96c8;border-radius:2px"></div>
<div style="left:674px;top:711px;width:1px;height:19px;background:#a0aac4"></div>
<div style="left:675px;top:711px;width:1px;height:19px;background:#ffffff"></div>
<div class="t rb" style="left:679px;top:713px;">合计：<i>0</i></div>
<div style="left:726px;top:711px;width:1px;height:19px;background:#a0aac4"></div>
<div style="left:727px;top:711px;width:1px;height:19px;background:#ffffff"></div>
<div style="left:1275px;top:711px;width:1px;height:19px;background:#a0aac4"></div></body></html>
